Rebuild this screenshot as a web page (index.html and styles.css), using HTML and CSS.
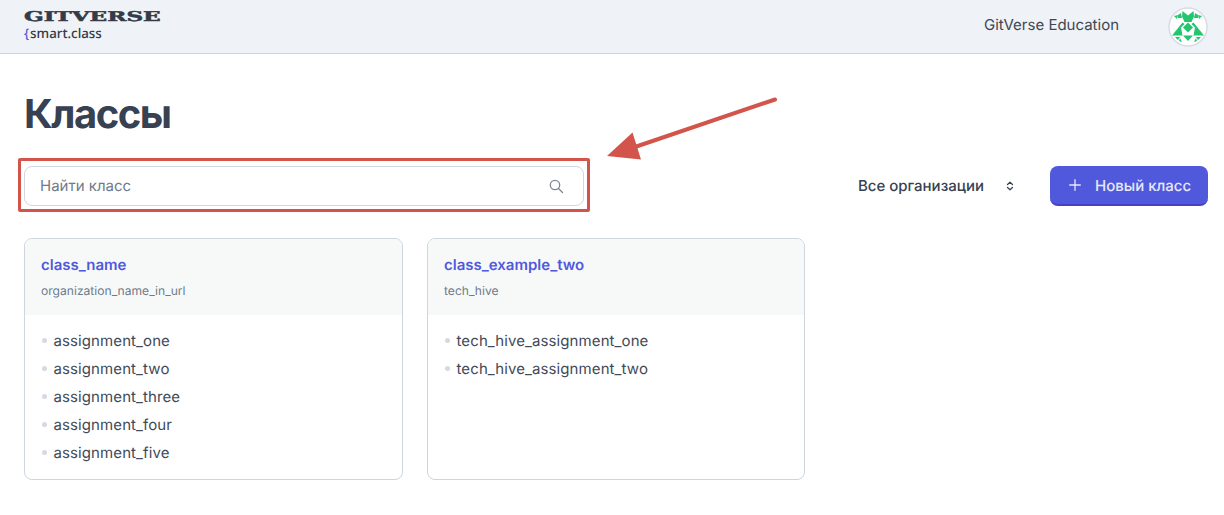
FILE: index.html
```html
<!DOCTYPE html>
<html lang="ru">
<head>
<meta charset="utf-8">
<title>Классы</title>
<link rel="stylesheet" href="styles.css">
</head>
<body>
<header class="topbar">
  <div class="logo">
    <div class="logo-main">GITVERSE</div>
    <div class="logo-sub"><span class="logo-brace">{</span>smart.class</div>
  </div>
  <nav class="top-right">
    <span class="edu">GitVerse Education</span>
    <svg class="avatar" viewBox="0 0 40 40" width="40" height="40">
      <circle cx="20" cy="20" r="19" fill="#fff" stroke="#d8dde3" stroke-width="1.500"/>
      <g fill="#22c66f">
        <path d="M14.500 4l5.500 4.500 5.500-4.500.5 5.500-2.500 5.500h-7l-2.500-5.500z"/>
        <path d="M20 15.500l5 5-5 5-5-5z"/>
        <path d="M14.500 15.500l2 1.500-3.500 3.500 1.500 8h-10.500z"/>
        <path d="M25.500 15.500l-2 1.500 3.500 3.500-1.500 8h10.500z"/>
        <path d="M15 28.500h10l-5 5.500z"/>
        <path d="M6 9l4-1-1 4zM10 8l3-2 1 5-4 0zM34 9l-4-1 1 4zM30 8l-3-2-1 5 4 0zM7 30h5l-2 3zM12 31l2 4-3-1zM33 30h-5l2 3zM28 31l-2 4 3-1z"/>
      </g>
    </svg>
  </nav>
</header>
<main class="page">
  <h1 class="title">Классы</h1>
  <div class="toolbar">
    <label class="search">
      <input class="search-input" type="text" placeholder="Найти класс">
      <svg class="search-icon" viewBox="0 0 16 16" width="16" height="16" fill="none" stroke="#7b8794" stroke-width="1.300" stroke-linecap="round">
        <circle cx="7" cy="7" r="4.700"/>
        <path d="M10.500 10.500l4 4"/>
      </svg>
    </label>
    <div class="toolbar-right">
      <div class="org-select">
        <span>Все организации</span>
        <svg class="updown" viewBox="0 0 8 10" width="8" height="10" fill="none" stroke="#374151" stroke-width="1.300" stroke-linecap="round" stroke-linejoin="round">
          <path d="M1.500 3.500L4 1.300l2.500 2.200M1.500 6.500L4 8.700l2.500-2.200"/>
        </svg>
      </div>
      <button class="new-btn" type="button">
        <svg viewBox="0 0 12 12" width="12" height="12" stroke="#e6e8fb" stroke-width="1.300" stroke-linecap="round"><path d="M6 .7v10.600M.7 6h10.600"/></svg>
        <span>Новый класс</span>
      </button>
    </div>
  </div>
  <section class="cards">
    <article class="card">
      <div class="card-head">
        <a class="card-name">class_name</a>
        <div class="card-org">organization_name_in_url</div>
      </div>
      <ul class="card-list">
        <li>assignment_one</li>
        <li>assignment_two</li>
        <li>assignment_three</li>
        <li>assignment_four</li>
        <li>assignment_five</li>
      </ul>
    </article>
    <article class="card">
      <div class="card-head">
        <a class="card-name">class_example_two</a>
        <div class="card-org">tech_hive</div>
      </div>
      <ul class="card-list">
        <li>tech_hive_assignment_one</li>
        <li>tech_hive_assignment_two</li>
      </ul>
    </article>
  </section>
</main>
<div class="mark-box"></div>
<svg class="mark-arrow" viewBox="0 0 190 70" width="190" height="70" fill="#d2544a">
  <path d="M168 4.500L22 54" stroke="#d2544a" stroke-width="4" stroke-linecap="round"/>
  <path d="M0 61L25.500 37.500 34 64.500z"/>
</svg>
</body>
</html>
```
FILE: styles.css
```css
* { box-sizing: border-box; }
html, body { margin: 0; padding: 0; }
body {
  font-family: Inter, "Liberation Sans", sans-serif;
  color: #374151;
  background: #fff;
  height: 515px;
  overflow: hidden;
  position: relative;
  text-rendering: geometricPrecision;
}
.topbar {
  height: 54px;
  background: #eff2f6;
  border-bottom: 1px solid #cdd5df;
  display: flex;
  align-items: center;
  justify-content: space-between;
  padding: 0 16px 2px 24px;
}
.logo { display: flex; flex-direction: column; margin-top: 1px; }
.logo-main {
  font-family: "DejaVu Serif", serif;
  font-weight: 700;
  font-size: 13.500px;
  line-height: 11px;
  height: 11px;
  color: #343a46;
  width: 137px;
  -webkit-text-stroke: 0.5px #343a46;
  transform: scale(1.71, 1);
  transform-origin: left center;
  white-space: nowrap;
}
.logo-sub {
  font-family: "Noto Sans", sans-serif;
  font-size: 13.300px;
  line-height: 16px;
  color: #343a46;
  margin-top: 2px;
  font-weight: 500;
}
.logo-brace { color: #4f5bd5; margin-right: 1px; }
.top-right { display: flex; align-items: center; gap: 49px; }
.edu { font-size: 15px; line-height: 20px; color: #3f4753; transform: translateY(-1px); }
.avatar { display: block; margin-top: 2px; }
.page { padding: 0 16px 0 24px; }
.title {
  margin: 36px 0 0;
  font-size: 40px;
  line-height: 48px;
  font-weight: 700;
  letter-spacing: -1.500px;
  color: #374151;
}
.toolbar {
  display: flex;
  align-items: center;
  justify-content: space-between;
  margin-top: 28px;
}
.search {
  width: 560px;
  height: 40px;
  border: 1px solid #d0d7e0;
  border-radius: 8px;
  display: flex;
  align-items: center;
  padding: 0 19px 0 15px;
}
.search-input {
  flex: 1;
  height: 20px;
  border: 0;
  outline: 0;
  padding: 0 0 1px;
  font: 15px Inter, sans-serif;
  line-height: 18px;
  color: #374151;
  background: transparent;
  text-rendering: geometricPrecision;
}
.search-input::placeholder { color: #6f7b8a; opacity: 1; }
.toolbar-right { display: flex; align-items: center; gap: 35px; }
.org-select {
  display: flex;
  align-items: center;
  gap: 22px;
  font-size: 15px;
  font-weight: 500;
  color: #374151;
}
.org-select span { transform: translateY(-1px); }
.updown { margin-right: 1px; }
.new-btn {
  width: 158px;
  height: 40px;
  display: flex;
  align-items: center;
  gap: 14px;
  padding: 0 0 0 19px;
  border: 0;
  border-bottom: 2px solid #4a3fc4;
  border-radius: 8px;
  background: #5059dc;
  color: #e6e8fb;
  font: 500 15px Inter, sans-serif;
  text-rendering: geometricPrecision;
}
.cards {
  display: grid;
  grid-template-columns: 379px 378px;
  column-gap: 24px;
  margin-top: 32px;
  align-items: stretch;
}
.card {
  height: 242px;
  border: 1px solid #cdd5df;
  border-radius: 8px;
  overflow: hidden;
}
.card-head {
  height: 76px;
  background: #f7f9f9;
  padding: 16px 16px 0;
}
.card-name {
  display: block;
  font-size: 15px;
  line-height: 20px;
  font-weight: 600;
  color: #5059dc;
}
.card-org {
  margin-top: 8px;
  font-size: 12.100px;
  line-height: 16px;
  color: #6f7b8a;
}
.card-list {
  list-style: none;
  margin: 0;
  padding: 11px 16px 0 16px;
}
.card-list li {
  display: flex;
  align-items: center;
  gap: 6.500px;
  height: 28px;
  font-size: 15px;
  letter-spacing: 0.1px;
  color: #424a57;
}
.card-list li::before {
  content: "";
  width: 5px;
  height: 5px;
  margin-left: 1px;
  border-radius: 50%;
  background: #d5dae1;
}
.mark-box {
  position: absolute;
  left: 18px;
  top: 158px;
  width: 572px;
  height: 54px;
  border: 3px solid #d2544a;
  border-radius: 2px;
  pointer-events: none;
}
.mark-arrow {
  position: absolute;
  left: 607px;
  top: 95px;
  pointer-events: none;
}
```
